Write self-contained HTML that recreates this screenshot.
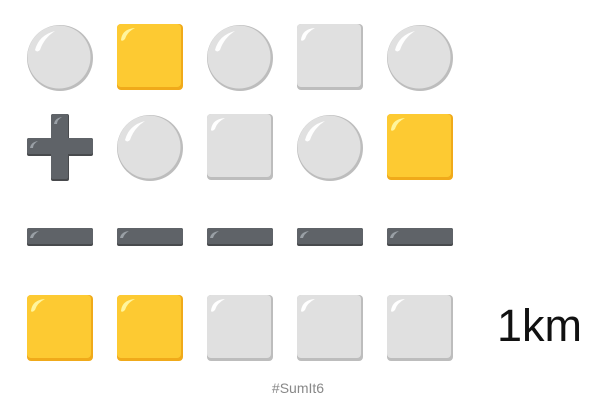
<!DOCTYPE html>
<html><head><meta charset="utf-8"><style>
html,body{margin:0;padding:0;background:#fff;width:600px;height:420px;overflow:hidden}
svg{position:absolute;left:0;top:0}
.t{position:absolute;font-family:"Liberation Sans",sans-serif}
</style></head><body>
<svg width="600" height="420" viewBox="0 0 600 420">
<defs>
<g id="c">
<circle cx="33" cy="33" r="33" fill="#bdbdbd"/>
<circle cx="32" cy="32" r="31.5" fill="#e0e0e0"/>
<path d="M8 25 Q12 10 28 6 Q17 13 13 25 Q10 28 8 25Z" fill="#fff" opacity="0.95"/>
</g>
<g id="y">
<rect x="0" y="0" width="66" height="66" rx="4" fill="#f0aa1a"/>
<rect x="0" y="0" width="64" height="63" rx="4" fill="#fdca32"/>
<path d="M4 16 Q5 5 18 4 Q10 8 8 15 Q5 18 4 16Z" fill="#fff59d"/>
</g>
<g id="g">
<rect x="0" y="0" width="66" height="66" rx="4" fill="#bdbdbd"/>
<rect x="0" y="0" width="64" height="63" rx="4" fill="#e0e0e0"/>
<path d="M4 16 Q5 5 18 4 Q10 8 8 15 Q5 18 4 16Z" fill="#fff"/>
</g>
<g id="m">
<rect x="0" y="0" width="66" height="18" rx="2" fill="#484a4d"/>
<rect x="0" y="0" width="66" height="16" rx="2" fill="#5f6368"/>
<path d="M3 10 Q4 4 12 3 Q7 6 6 10Z" fill="#9aa0a6"/>
</g>
</defs>
<use href="#c" x="27" y="25"/><use href="#y" x="117" y="24"/><use href="#c" x="207" y="25"/><use href="#g" x="297" y="24"/><use href="#c" x="387" y="25"/>
<rect x="51" y="114" width="18" height="67" rx="2" fill="#484a4d"/>
<rect x="51" y="114" width="17" height="65" rx="2" fill="#5f6368"/>
<rect x="27" y="138" width="66" height="18" rx="2" fill="#484a4d"/>
<rect x="27" y="138" width="66" height="16" rx="2" fill="#5f6368"/>
<rect x="51" y="150" width="17" height="8" fill="#5f6368"/>
<path d="M54 124 Q55 118 62 117 Q57 120 57 124Z" fill="#9aa0a6"/>
<path d="M30 148 Q31 142 38 141 Q33 144 33 148Z" fill="#9aa0a6"/>
<use href="#c" x="117" y="115"/><use href="#g" x="207" y="114"/><use href="#c" x="297" y="115"/><use href="#y" x="387" y="114"/>
<use href="#m" x="27" y="228"/><use href="#m" x="117" y="228"/><use href="#m" x="207" y="228"/><use href="#m" x="297" y="228"/><use href="#m" x="387" y="228"/>
<use href="#y" x="27" y="295"/><use href="#y" x="117" y="295"/><use href="#g" x="207" y="295"/><use href="#g" x="297" y="295"/><use href="#g" x="387" y="295"/>
</svg>
<div class="t" style="left:497px;top:301px;font-size:45px;color:#111;line-height:50px">1km</div>
<div class="t" style="left:0;width:596px;text-align:center;top:379px;font-size:14px;color:#888;line-height:18px">#SumIt6</div>
</body></html>
